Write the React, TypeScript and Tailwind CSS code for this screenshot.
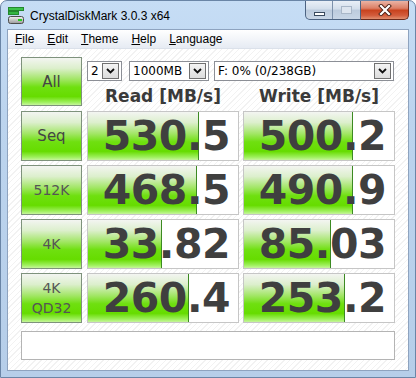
import React from 'react';

// ── Data ──────────────────────────────────────────────────────
const ROWS = [
    { label: ['Seq'], read: '530.5', readBar: 111, write: '500.2', writeBar: 109, comic: true },
    { label: ['512K'], read: '468.5', readBar: 109, write: '490.9', writeBar: 109, comic: false },
    { label: ['4K'], read: '33.82', readBar: 74, write: '85.03', writeBar: 87, comic: false },
    { label: ['4K', 'QD32'], read: '260.4', readBar: 101, write: '253.2', writeBar: 101, comic: false },
];

const GREEN =
    'bg-[linear-gradient(to_bottom,#f3f5f1_0%,#dcefcc_22%,#a2e666_45%,#6fe010_62%,#66dc00_82%,#9ef05c_94%,#c6f59c_100%)]';

// ── Title bar icon ────────────────────────────────────────────
function AppIcon() {
    return (
        <svg width="16" height="17" viewBox="0 0 16 17">
            <defs>
                <linearGradient id="disk" x1="0" y1="0" x2="0" y2="1">
                    <stop offset="0" stopColor="#f2f2f2" />
                    <stop offset="1" stopColor="#9a9a9a" />
                </linearGradient>
            </defs>
            <rect x="0.5" y="0.5" width="15" height="3" fill="#3cc24a" stroke="#23882e" />
            <rect x="0.5" y="4.5" width="10" height="3" fill="#34b542" stroke="#23882e" />
            <rect x="0.5" y="9.5" width="15" height="7" rx="2" fill="url(#disk)" stroke="#4d4d4d" />
            <rect x="10" y="12" width="4" height="2" fill="#22d022" />
        </svg>
    );
}

// ── Caption buttons ───────────────────────────────────────────
function CaptionButtons() {
    return (
        <div className="ml-auto mr-[6px] flex h-[19px]">
            <div className="flex h-full overflow-hidden rounded-bl-[5px] border border-t-0 border-[#4c6382] bg-[linear-gradient(to_bottom,#e9eff7_0%,#d3deeb_45%,#bccbdd_50%,#c8d6e6_100%)]">
                <div className="flex w-[26px] items-end justify-center pb-[3px]">
                    <div className="h-[4px] w-[11px] border border-[#3a4a5e] bg-white" />
                </div>
                <div className="w-px bg-[#7d91ab]" />
                <div className="flex w-[27px] items-center justify-center">
                    <div className="h-[8px] w-[11px] border border-[#a9b7c8] bg-[#dde5ef]" />
                </div>
            </div>
            <div className="flex h-full w-[48px] items-center justify-center rounded-br-[5px] border border-l-0 border-t-0 border-[#6b2a1c] bg-[linear-gradient(to_bottom,#eab3a4_0%,#dc7f66_40%,#c8431f_52%,#d35c3c_80%,#e08f6f_100%)]">
                <svg width="14" height="12" viewBox="0 0 14 12">
                    <path d="M3 2 L11 10 M11 2 L3 10" stroke="#4a2016" strokeWidth="4" strokeLinecap="square" />
                    <path d="M3 2 L11 10 M11 2 L3 10" stroke="#ffffff" strokeWidth="2.2" strokeLinecap="square" />
                </svg>
            </div>
        </div>
    );
}

// ── Combo box ─────────────────────────────────────────────────
function Combo({ value, width, className = '' }: { value: string; width: string; className?: string }) {
    return (
        <div className={`flex h-[20px] items-center border border-[#8c8f96] bg-white pl-[3px] pr-[2px] ${width} ${className}`}>
            <span className="flex-1 truncate text-[12px] leading-none text-black" style={{ fontFamily: '"DejaVu Sans", sans-serif' }}>
                {value}
            </span>
            <div className="flex h-[16px] w-[17px] items-center justify-center border border-[#707070] bg-[linear-gradient(to_bottom,#f4f4f4,#dcdcdc)]">
                <svg width="9" height="6" viewBox="0 0 9 6">
                    <path d="M1 1 L4.5 4.5 L8 1" fill="none" stroke="#101010" strokeWidth="1.8" />
                </svg>
            </div>
        </div>
    );
}

// ── Green test button ─────────────────────────────────────────
function TestButton({ lines, comic, tall }: { lines: string[]; comic?: boolean; tall?: boolean }) {
    return (
        <div
            className={`flex w-[61px] flex-col items-center justify-center border border-[#7e927c] ${GREEN} ${tall ? 'h-[49px]' : 'h-[50px]'}`}
        >
            {lines.map((l) => (
                <span
                    key={l}
                    className={`${comic ? 'text-[15px] text-[#444444]' : 'text-[14px] text-[#555555]'} leading-[20px]`}
                    style={{ fontFamily: '"DejaVu Sans", sans-serif' }}
                >
                    {l}
                </span>
            ))}
        </div>
    );
}

// ── Result cell ───────────────────────────────────────────────
function Result({ value, bar }: { value: string; bar: number }) {
    return (
        <div className="relative flex h-[50px] w-[152px] items-center justify-end overflow-hidden border border-[#c6c6c6] bg-white pr-[8px]">
            <div
                className={`absolute inset-y-0 left-0 border-r border-[#3c8a22] ${GREEN}`}
                style={{ width: `${bar}px` }}
            />
            <span
                className="relative text-[41px] font-bold leading-none tracking-[-0.5px] text-[#3f3f3f]"
                style={{ fontFamily: '"DejaVu Sans", Verdana, sans-serif' }}
            >
                {value}
            </span>
        </div>
    );
}

export default function App() {
    return (
        <div
            className="flex h-[378px] w-[416px] flex-col overflow-hidden rounded-t-[7px] border border-[#6a85a6] bg-[linear-gradient(to_bottom,#c6ddf5_0%,#bcd4ee_30%,#b6cee9_100%)]"
            style={{ fontFamily: '"Liberation Sans", Arial, sans-serif' }}
        >
            {/* title bar */}
            <div className="flex h-[28px] shrink-0 items-start">
                <div className="ml-[7px] mt-[6px]">
                    <AppIcon />
                </div>
                <span className="ml-[6px] mt-[7px] text-[12px] leading-[16px] text-black">CrystalDiskMark 3.0.3 x64</span>
                <CaptionButtons />
            </div>

            {/* client */}
            <div className="mx-[6px] flex flex-1 flex-col border border-[#8ea3bf] bg-white">
                <div className="flex h-[19px] shrink-0 items-center gap-[13px] border-b border-[#dbe1ea] bg-[linear-gradient(to_bottom,#ffffff,#e6ebf3)] pl-[7px] text-[12px] text-black">
                    <span><u>F</u>ile</span>
                    <span><u>E</u>dit</span>
                    <span><u>T</u>heme</span>
                    <span><u>H</u>elp</span>
                    <span><u>L</u>anguage</span>
                </div>

                <div className="flex flex-1 flex-col bg-[repeating-linear-gradient(135deg,#ffffff_0px,#ffffff_3px,#f2f2f2_3px,#f2f2f2_4px)] px-[13px] pt-[8px]">
                    {/* top row */}
                    <div className="flex h-[49px] gap-[5px]">
                        <TestButton lines={['All']} comic tall />
                        <div className="flex flex-col">
                            <div className="mt-[4px] flex">
                                <Combo value="2" width="w-[35px]" />
                                <Combo value="1000MB" width="w-[80px]" className="ml-[7px]" />
                                <Combo value="F: 0% (0/238GB)" width="w-[180px]" className="ml-[5px]" />
                            </div>
                            <div
                                className="mt-[5px] flex gap-[4px] text-[17px] font-bold leading-[20px] text-[#3a3a3a]"
                                style={{ fontFamily: '"DejaVu Sans", Verdana, sans-serif' }}
                            >
                                <span className="w-[152px] text-center">Read [MB/s]</span>
                                <span className="w-[152px] text-center">Write [MB/s]</span>
                            </div>
                        </div>
                    </div>

                    {/* results */}
                    <div className="mt-[5px] flex flex-col gap-[4px]">
                        {ROWS.map((r) => (
                            <div key={r.read} className="flex">
                                <TestButton lines={r.label} comic={r.comic} />
                                <div className="ml-[5px]">
                                    <Result value={r.read} bar={r.readBar} />
                                </div>
                                <div className="ml-[4px]">
                                    <Result value={r.write} bar={r.writeBar} />
                                </div>
                            </div>
                        ))}
                    </div>

                    <div className="mt-[8px] h-[29px] w-[374px] border border-[#b4b4b4] bg-white" />
                </div>
            </div>
            <div className="h-[6px] shrink-0" />
        </div>
    );
}
